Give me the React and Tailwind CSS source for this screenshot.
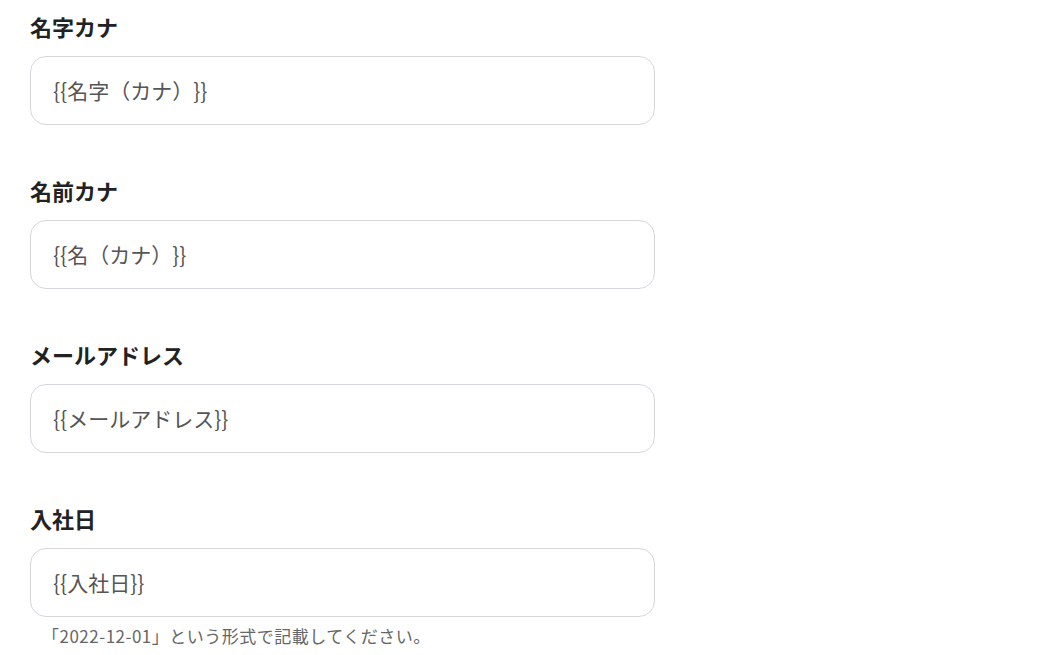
import React from "react";

const fields = [
  { label: "名字カナ", value: "{{名字（カナ）}}" },
  { label: "名前カナ", value: "{{名（カナ）}}" },
  { label: "メールアドレス", value: "{{メールアドレス}}" },
  {
    label: "入社日",
    value: "{{入社日}}",
    help: "「2022-12-01」という形式で記載してください。",
  },
];

const App = () => {
  return (
    <div
      className="min-h-screen bg-white px-[30px] pt-[12px] [text-spacing-trim:space-all]"
      style={{ fontFamily: '"Noto Sans CJK JP", "Noto Sans", sans-serif' }}
    >
      <div className="flex flex-col gap-[51px] w-[625px]">
        {fields.map((f) => (
          <div key={f.label} className="flex flex-col">
            <label className="text-[22px] leading-[28px] font-bold text-[#222]">
              {f.label}
            </label>
            <div className="mt-[16px] h-[69px] rounded-[16px] border border-[#d5d7dd] flex items-center px-[22px]">
              <span className="text-[21px] text-[#555]">{f.value}</span>
            </div>
            {f.help && (
              <p className="mt-[8px] pl-[12px] text-[17px] leading-[22px] tracking-[0.5px] text-[#666]">
                {f.help}
              </p>
            )}
          </div>
        ))}
      </div>
    </div>
  );
};

export default App;
